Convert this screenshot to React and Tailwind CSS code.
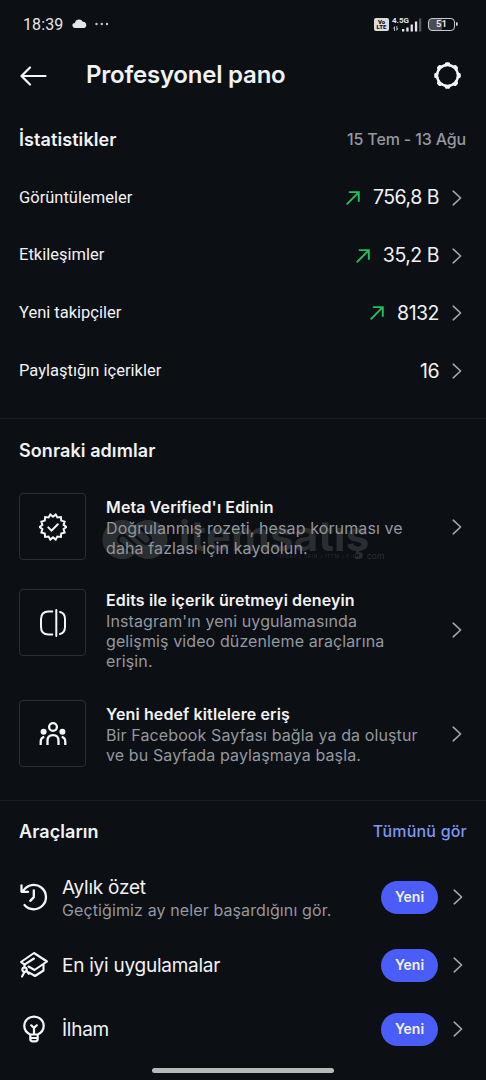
import clsx from "clsx";

const stats = [
  { label: "Görüntülemeler", value: "756,8 B", up: true },
  { label: "Etkileşimler", value: "35,2 B", up: true },
  { label: "Yeni takipçiler", value: "8132", up: true },
  { label: "Paylaştığın içerikler", value: "16", up: false },
];

const steps = [
  {
    title: "Meta Verified'ı Edinin",
    lines: ["Doğrulanmış rozeti, hesap koruması ve", "daha fazlası için kaydolun."],
    icon: "verified",
  },
  {
    title: "Edits ile içerik üretmeyi deneyin",
    lines: ["Instagram'ın yeni uygulamasında", "gelişmiş video düzenleme araçlarına", "erişin."],
    icon: "edits",
  },
  {
    title: "Yeni hedef kitlelere eriş",
    lines: ["Bir Facebook Sayfası bağla ya da oluştur", "ve bu Sayfada paylaşmaya başla."],
    icon: "people",
  },
];

const tools = [
  { title: "Aylık özet", desc: "Geçtiğimiz ay neler başardığını gör.", icon: "history", height: "h-[72px]" },
  { title: "En iyi uygulamalar", icon: "cap", height: "h-16" },
  { title: "İlham", icon: "bulb", height: "h-16" },
];

const Chevron = () => (
  <svg width="10" height="16" viewBox="0 0 10 16" fill="none" stroke="#a4a8ad" strokeWidth="1.6" strokeLinecap="round" strokeLinejoin="round">
    <path d="M1.2 1.2 8.6 8l-7.4 6.8" />
  </svg>
);

const TrendArrow = () => (
  <svg width="16" height="16" viewBox="0 0 16 16" fill="none" stroke="#1fc15c" strokeWidth="1.9">
    <path d="M1.700 14.300 13.800 2.200M3.800 2.100h10v9.600" />
  </svg>
);

const GearIcon = () => (
  <svg width="29" height="29" viewBox="0 0 24 24" fill="none" stroke="#f5f6f7" strokeWidth="2" strokeLinejoin="round">
    <circle cx="12" cy="12" r="8.635" />
    <path d="M14.232 3.656a1.269 1.269 0 0 1-.796-.66L12.93 2h-1.86l-.505.996a1.269 1.269 0 0 1-.796.66m-.001 16.688a1.269 1.269 0 0 1 .796.66l.505.996h1.862l.505-.996a1.269 1.269 0 0 1 .796-.66M3.656 9.768a1.269 1.269 0 0 1-.66.796L2 11.07v1.862l.996.505a1.269 1.269 0 0 1 .66.796m16.688-.001a1.269 1.269 0 0 1 .66-.796L22 12.93v-1.86l-.996-.505a1.269 1.269 0 0 1-.66-.796M7.678 4.522a1.269 1.269 0 0 1-1.03.096l-1.06-.348L4.27 5.587l.348 1.062a1.269 1.269 0 0 1-.096 1.03m11.8 11.799a1.269 1.269 0 0 1 1.03-.096l1.06.348 1.318-1.317-.348-1.062a1.269 1.269 0 0 1 .096-1.03m-14.956.001a1.269 1.269 0 0 1 .096 1.03l-.348 1.06 1.317 1.318 1.062-.348a1.269 1.269 0 0 1 1.03.096m11.799-11.8a1.269 1.269 0 0 1-.096-1.03l.348-1.06-1.317-1.318-1.062.348a1.269 1.269 0 0 1-1.03-.096" />
  </svg>
);

const icons = {
  verified: (
    <svg width="28" height="28" viewBox="0 0 28 28" fill="none" stroke="#f5f6f7" strokeWidth="2" strokeLinejoin="miter" strokeLinecap="round">
      <path d="M14 3.700 16.700 1.500l1.700 3 3.500-.4.300 3.500 3.400 1-1 3.300 2.700 2.100-2.700 2.100 1 3.400-3.400 1-.3 3.500-3.500-.4-1.700 3L14 24.400l-2.700 2.200-1.700-3-3.500.4-.3-3.500-3.400-1 1-3.400L.7 14l2.700-2.100-1-3.300 3.400-1 .3-3.500 3.500.4 1.700-3z" />
      <path d="m9.300 14.400 3.200 3.200 6.300-6.400" />
    </svg>
  ),
  edits: (
    <svg width="30" height="30" viewBox="0 0 30 30" fill="none" stroke="#f5f6f7" strokeWidth="2" strokeLinecap="round">
      <path d="M14.300 3.500h-3.800C5.500 3.500 3 6.200 3 11.200v7.600c0 5 2.500 7.700 7.500 7.700h3.800M18.300 2v26M22 4c3.500.6 5 3.200 5 7.200v7.600c0 4-1.500 6.600-5 7.200" />
    </svg>
  ),
  people: (
    <svg width="30" height="30" viewBox="0 0 30 30" fill="none" stroke="#f5f6f7" strokeWidth="2.300" strokeLinecap="butt">
      <circle cx="15" cy="8" r="3.900" />
      <path d="M9.500 26v-4.300c0-3.400 2-5.500 5.500-5.500s5.500 2.100 5.500 5.500V26M2.700 26v-3.300c0-2.700 1.100-4.400 3.600-4.900M27.300 26v-3.300c0-2.700-1.100-4.400-3.600-4.900" />
      <circle cx="5.600" cy="12.700" r="3" fill="#f5f6f7" stroke="none" />
      <circle cx="24.400" cy="12.700" r="3" fill="#f5f6f7" stroke="none" />
    </svg>
  ),
  history: (
    <svg width="30" height="30" viewBox="0 0 30 30" fill="none" stroke="#f5f6f7" strokeWidth="2.300" strokeLinecap="round" strokeLinejoin="round">
      <path d="M5.500 23A12.200 12.200 0 1 0 4.500 8.500M2.500 3.400v6.400h6.600M14.800 8.300v6.800l-3.500 3.800" />
    </svg>
  ),
  cap: (
    <svg width="30" height="30" viewBox="0 0 30 30" fill="none" stroke="#f5f6f7" strokeWidth="2.100" strokeLinecap="round" strokeLinejoin="round">
      <path d="M15 3 28 11.500 15.500 20 9.500 16.500M15 3 2 12l3.500 2.600 9.500-6.100M24.500 14.500v6L16 26l-6.200-3.700" />
      <circle cx="5.500" cy="19.700" r="2.200" />
      <path d="M5.500 14.600v2.800M5.500 22l-2.500 4.500M7.500 20.800 9.800 24" />
    </svg>
  ),
  bulb: (
    <svg width="30" height="30" viewBox="0 0 30 30" fill="none" stroke="#f5f6f7" strokeWidth="2.200" strokeLinecap="round" strokeLinejoin="round">
      <path d="M11.300 20.500c-3.700-1.700-6-4.600-6-8.500C5.300 6.500 9.500 2.600 15 2.600s9.700 3.900 9.700 9.400c0 3.900-2.300 6.800-6 8.500zM11.300 20.500v4.200c0 1.700.9 2.700 2.500 2.700h2.400c1.600 0 2.500-1 2.500-2.700v-4.200M11.500 24h7M15 20.500v-6.800M12.200 11.300l2.800 2.600 2.800-2.600" />
    </svg>
  ),
};

const StatusBar = () => (
  <div className="flex h-12 items-center pr-7 pl-[23px] text-[#e4e5e7]">
    <span className="pt-px font-[Roboto,sans-serif] text-base tracking-[0.1px]">18:39</span>
    <svg className="ml-[9px]" width="15" height="10" viewBox="0 0 15 10" fill="#e4e5e7">
      <path d="M3 9a2.500 2.500 0 0 1-.2-5A4.300 4.300 0 0 1 10.800 2.700a3.200 3.200 0 0 1 1 6.300z" />
    </svg>
    <svg className="ml-2" width="14" height="4" viewBox="0 0 14 4" fill="#c8cacd">
      <circle cx="1.500" cy="2" r="1.200" />
      <circle cx="6.800" cy="2" r="1.200" />
      <circle cx="12" cy="2" r="1.200" />
    </svg>
    <div className="ml-auto flex items-center">
      <div className="flex h-[13px] w-[15px] flex-col items-center justify-center rounded-[2px] bg-[#dcdddf] font-[Roboto,sans-serif] text-[6px] leading-[5.500px] font-black text-[#0c0f14]">
        <span>Vo</span>
        <span>LTE</span>
      </div>
      <div className="relative ml-[3px] h-[15px] w-[30px]">
        <span className="block font-[Roboto,sans-serif] text-[8px] leading-[7px] font-bold">4.5G</span>
        <svg className="absolute top-0 left-0" width="30" height="15" viewBox="0 0 30 15" fill="#e4e5e7">
          <path d="M1 11.500 2.800 9v5H2v-2.500zM4.500 9h.8v2.500h1L4.500 14zM10 12h2.300v2.500H10zM14.300 10.500h2.300v4h-2.300zM18.600 7.500h2.300v7h-2.300zM22.900 4.500h2.300v10h-2.300z" />
          <path d="M27 1.500h2.300v13H27z" fill="#55585d" />
        </svg>
      </div>
      <div className="ml-1.5 flex h-[13px] w-[27px] items-center justify-center rounded-[4px] border border-[#c8cacd] bg-linear-to-r from-[#4a4d52] from-50% to-transparent to-50% font-[Roboto,sans-serif] text-[9.500px] leading-none font-bold">
        51
      </div>
      <div className="ml-px h-1 w-0.5 rounded-r-sm bg-[#c8cacd]" />
    </div>
  </div>
);

// faint brand mark laid over the first step card
const Watermark = () => (
  <div className="pointer-events-none absolute top-[26px] left-[83px] h-12 w-[290px] text-[#8a8a8a] opacity-25">
    <svg className="absolute top-0 left-0" width="66" height="42" viewBox="0 0 66 42" fill="currentColor">
      <mask id="chain">
        <rect width="66" height="42" fill="#fff" />
        <path d="M29 32.500 18.500 24.500a4.500 4.500 0 1 1 5.500-7L40 31.500M37 8l10 8.500a4.500 4.500 0 1 1-5.500 7.500L32 16" stroke="#000" strokeWidth="2.600" fill="none" />
      </mask>
      <path mask="url(#chain)" d="M20 1a19.500 19.500 0 0 1 13 5 19.500 19.500 0 1 1 0 29A19.500 19.500 0 1 1 20 1z" />
    </svg>
    <span className="absolute top-[-4px] left-[77px] font-[Inter,sans-serif] text-[42px] leading-[42px] font-bold tracking-[0.3px]">itemsatış</span>
    <span className="absolute top-[35px] left-[176px] font-[Inter,sans-serif] text-[4.500px] leading-[6px] tracking-[0.9px] whitespace-nowrap">HESAP / SKIN / ITEM / E-PIN</span>
    <span className="absolute top-[32px] left-[265px] font-[Inter,sans-serif] text-[8.500px] leading-[10px]">com</span>
  </div>
);

const SectionTitle = ({ children }) => (
  <h2 className="text-[18px] leading-6 font-semibold tracking-[0.08px]">{children}</h2>
);

function App() {
  return (
    <div className="flex h-[1080px] w-[486px] flex-col overflow-hidden bg-[#0c0f14] font-[Inter,'Noto_Sans',sans-serif] text-[#f1f2f4]">
      <StatusBar />

      <header className="flex h-[54px] items-center px-5">
        <svg className="mt-px" width="28" height="20" viewBox="0 0 28 20" fill="none" stroke="#f5f6f7" strokeWidth="2.200" strokeLinecap="round" strokeLinejoin="round">
          <path d="M10 1.500 1.500 10l8.500 8.500M1.500 10H25.500" />
        </svg>
        <h1 className="ml-[38px] text-2xl font-semibold tracking-[-0.22px]">Profesyonel pano</h1>
        <div className="mr-1 ml-auto">
          <GearIcon />
        </div>
      </header>

      <section className="h-[317px] border-b border-[#191c21] pt-[26px] pr-5 pl-[19px]">
        <div className="flex h-6 items-center justify-between">
          <SectionTitle>İstatistikler</SectionTitle>
          <span className="-mt-[3px] text-base font-medium tracking-[-0.15px] text-[#94989f]">15 Tem - 13 Ağu</span>
        </div>
        <ul className="mt-[17px]">
          {stats.map(({ label, value, up }) => (
            <li key={label} className="flex h-[57.800px] items-center pr-1">
              <span className="font-[Roboto,sans-serif] text-[16.500px]">{label}</span>
              <div className="ml-auto flex items-center">
                {up && <TrendArrow />}
                <span className="ml-3 text-[19.500px] tracking-[-0.500px]">{value}</span>
                <span className="ml-[13px]">
                  <Chevron />
                </span>
              </div>
            </li>
          ))}
        </ul>
      </section>

      <section className="h-[382px] border-b border-[#191c21] pt-5 pr-6 pl-[19px]">
        <SectionTitle>Sonraki adımlar</SectionTitle>
        <ul className="relative mt-[30px] flex flex-col gap-[29px]">
          {steps.map(({ title, lines, icon }) => (
            <li key={title} className="flex items-center">
              <div className="flex h-[67px] w-[67px] items-center justify-center self-start rounded-[4px] border border-[#2a2d32]">
                {icons[icon]}
              </div>
              <div className="ml-5 whitespace-nowrap">
                <h3 className="text-base leading-[22px] font-semibold tracking-[0.12px]">{title}</h3>
                {lines.map((line) => (
                  <p key={line} className="text-base leading-5 tracking-[0.11px] text-[#94989f]">
                    {line}
                  </p>
                ))}
              </div>
              <span className="ml-auto">
                <Chevron />
              </span>
            </li>
          ))}
          <Watermark />
        </ul>
      </section>

      <section className="flex-1 pt-[19px] pr-[19px] pl-[19px]">
        <div className="flex h-6 items-center justify-between">
          <SectionTitle>Araçların</SectionTitle>
          <a className="-mt-0.5 text-base font-medium tracking-[0.2px] text-[#7c98f3]">Tümünü gör</a>
        </div>
        <ul className="mt-[17px]">
          {tools.map(({ title, desc, icon, height }) => (
            <li key={title} className={clsx("flex items-center pr-1", height)}>
              {icons[icon]}
              <div className="ml-[13px] pt-0.5">
                <h3 className="text-[19px] leading-6 tracking-[-0.25px]">{title}</h3>
                {desc && <p className="text-base leading-[21px] tracking-[0.11px] text-[#94989f]">{desc}</p>}
              </div>
              <span className="ml-auto flex h-[33px] w-[57px] items-center justify-center rounded-full bg-[#4a5df9] text-sm font-semibold">
                Yeni
              </span>
              <span className="ml-[15px]">
                <Chevron />
              </span>
            </li>
          ))}
        </ul>
      </section>

      <div className="mx-auto mb-[7px] h-[5px] w-[182px] rounded-full bg-[#b7b8ba]" />
    </div>
  );
}

export default App;
